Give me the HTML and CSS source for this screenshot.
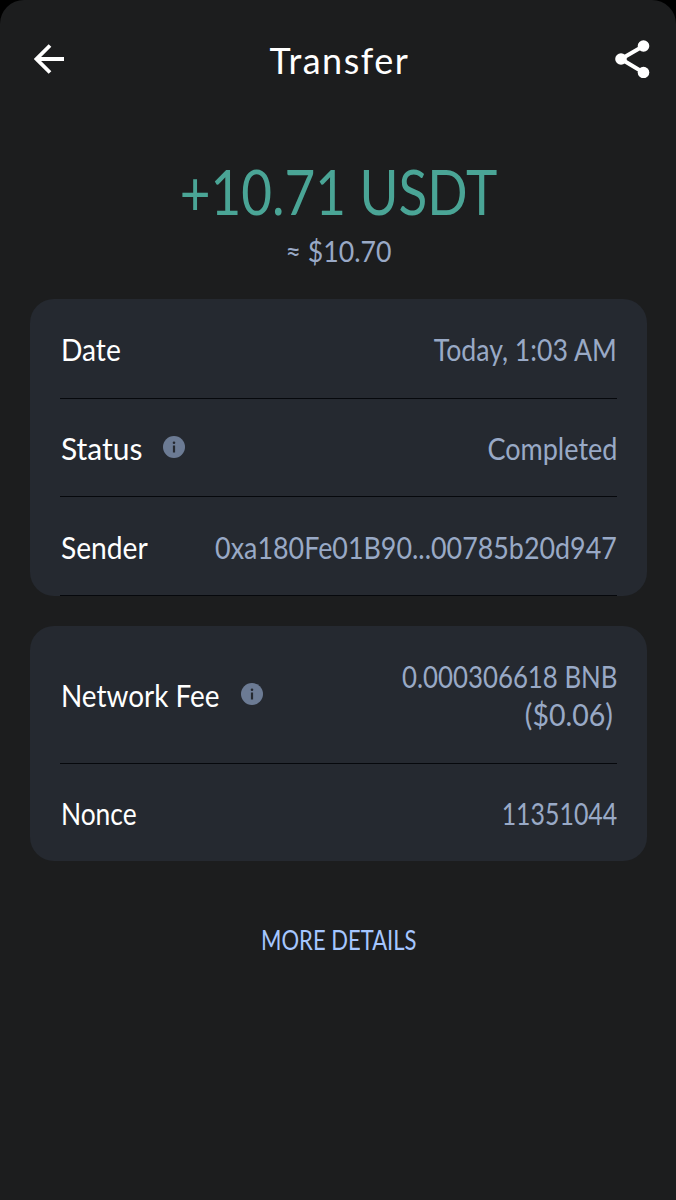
FILE: index.html
```html
<!DOCTYPE html>
<html lang="en">
<head>
  <meta charset="UTF-8" />
  <meta name="viewport" content="width=device-width, initial-scale=1.0"/>
  <title>Transfer</title>
  <link rel="stylesheet" href="styles.css">
</head>
<body>
  <div class="screen">
    <header class="top-bar">
      <button class="icon-btn" aria-label="Back">
        <svg width="30" height="30" viewBox="0 0 30 30" fill="none" stroke="#fff" stroke-width="3.8">
          <path d="M30 15H3.5M16 1.5L2.5 15L16 28.5"/>
        </svg>
      </button>
      <h1 class="title">Transfer</h1>
      <button class="icon-btn" aria-label="Share">
        <svg width="35" height="38" viewBox="0 0 35 38" fill="#fff">
          <path d="M28.5 6L6 19L28.5 32.5" fill="none" stroke="#fff" stroke-width="4"/>
          <circle cx="28.5" cy="6" r="5.8"/>
          <circle cx="6" cy="19" r="5.8"/>
          <circle cx="28.5" cy="32.5" r="5.8"/>
        </svg>
      </button>
    </header>

    <section class="amount">
      <div class="amount-value">+10.71 USDT</div>
      <div class="amount-fiat">≈ $10.70</div>
    </section>

    <div class="card card-main">
      <div class="row">
        <span class="label date">Date</span>
        <span class="value today">Today, 1:03 AM</span>
      </div>
      <div class="row">
        <span class="label status">Status</span>
        <svg class="info" width="22" height="22" viewBox="0 0 22 22">
          <circle cx="11" cy="11" r="11" fill="#6c7b94"/>
          <circle cx="11" cy="6.7" r="1.3" fill="#252930"/>
          <path d="M11 9.5V16.5" stroke="#252930" stroke-width="2.2"/>
        </svg>
        <span class="value completed">Completed</span>
      </div>
      <div class="row">
        <span class="label sender">Sender</span>
        <span class="value address">0xa180Fe01B90...00785b20d947</span>
      </div>
    </div>

    <div class="card card-fee">
      <div class="row">
        <span class="label network">Network Fee</span>
        <svg class="info info-fee" width="22" height="22" viewBox="0 0 22 22">
          <circle cx="11" cy="11" r="11" fill="#6c7b94"/>
          <circle cx="11" cy="6.7" r="1.3" fill="#252930"/>
          <path d="M11 9.5V16.5" stroke="#252930" stroke-width="2.2"/>
        </svg>
        <span class="value fee">
          <span class="fee-coin">0.000306618 BNB</span>
          <span class="fee-fiat">($0.06)</span>
        </span>
      </div>
      <div class="row">
        <span class="label nonce">Nonce</span>
        <span class="value number">11351044</span>
      </div>
    </div>

    <button class="more">MORE DETAILS</button>
  </div>
</body>
</html>
```
FILE: styles.css
```css
* {
  box-sizing: border-box;
}

body {
  font-family: Lato, "Open Sans", sans-serif;
  background: #000;
  margin: 0;
}

button {
  background: none;
  border: none;
  padding: 0;
  font-family: inherit;
  cursor: pointer;
}

.screen {
  height: 1200px;
  background: #1c1d1e;
  border-radius: 24px 24px 0 0;
  padding: 0 29px 0 30px;
  display: flex;
  flex-direction: column;
}

.top-bar {
  height: 118px;
  display: flex;
  align-items: center;
  justify-content: space-between;
  margin: 0 -3px 0 4px;
}

.icon-btn {
  display: flex;
}

.icon-btn svg {
  display: block;
}

.title {
  margin: 0;
  color: #fff;
  font-size: 36px;
  font-weight: 400;
  line-height: 44px;
  letter-spacing: 1.5px;
  padding-top: 2px;
}

.amount {
  height: 181px;
  padding-top: 35px;
  text-align: center;
  white-space: nowrap;
}

.amount-value {
  color: #4aa596;
  font-size: 62px;
  line-height: 76px;
  transform: scaleX(0.855);
}

.amount-fiat {
  color: #99a9c6;
  font-size: 29px;
  line-height: 38px;
  margin-top: 3px;
  transform: scaleX(0.92);
}

.card {
  display: grid;
  background: #252930;
  border-radius: 24px;
  padding: 0 30px;
  font-size: 30px;
}

.card-main {
  grid-template-rows: 100px 98px 99px;
}

.card-fee {
  grid-template-rows: 138px 97px;
  margin-top: 30px;
}

.row {
  display: flex;
  align-items: center;
  border-bottom: 1px solid #06080c;
  white-space: nowrap;
  line-height: 38px;
  padding-top: 1px;
}

.card-fee .row:last-child {
  border-bottom: none;
}

.label {
  color: #fff;
  padding-left: 1px;
  transform-origin: left;
}

.value {
  color: #99a9c6;
  margin-left: auto;
  text-align: right;
  transform-origin: right;
}

/* narrow the letters a little */
.date {
  transform: scaleX(0.94);
}

.today {
  transform: scaleX(0.89);
}

.completed {
  transform: scaleX(0.9);
}

.sender {
  transform: scaleX(0.94);
}

.address {
  transform: scaleX(0.895);
}

.network {
  transform: scaleX(0.93);
}

.nonce {
  transform: scaleX(0.88);
}

.number {
  transform: scaleX(0.83);
}

.fee {
  display: flex;
  flex-direction: column;
  align-items: flex-end;
}

.fee-coin {
  transform: scaleX(0.86);
  transform-origin: right;
}

.fee-fiat {
  padding-right: 4px;
  transform: scaleX(0.95);
  transform-origin: right;
}

.info {
  margin: -3px 0 0 20px;
}

.info-fee {
  margin-left: 10px;
}

.more {
  align-self: center;
  margin-top: 60px;
  color: #a5c6ff;
  font-size: 26px;
  line-height: 38px;
  transform: scaleX(0.847);
}
```
